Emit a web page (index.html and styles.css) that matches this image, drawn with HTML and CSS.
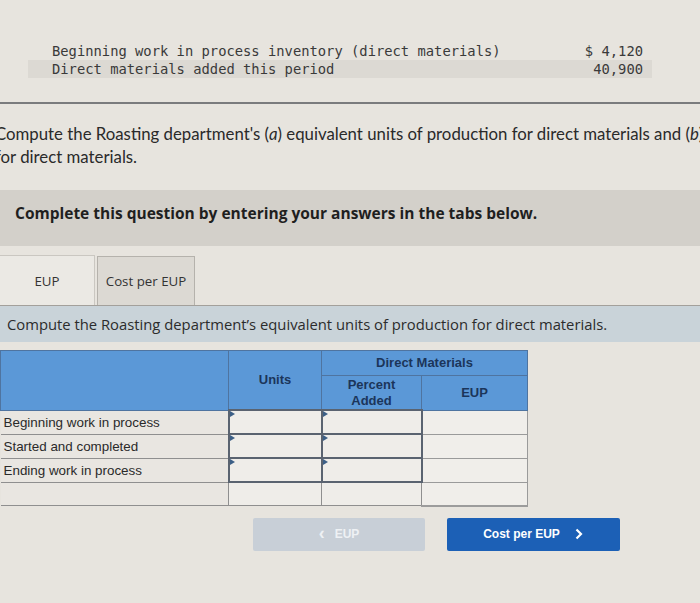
FILE: index.html
```html
<!DOCTYPE html>
<html>
<head>
<meta charset="utf-8">
<link rel="stylesheet" href="styles.css">
</head>
<body>
<div class="givens">
  <div class="grow"><span>Beginning work in process inventory (direct materials)</span><span>$ 4,120</span></div>
  <div class="grow shade"><span>Direct materials added this period</span><span>40,900</span></div>
</div>
<div class="rule"></div>
<div class="prompt">
  <div class="pline">Compute the Roasting department's (<i>a</i>) equivalent units of production for direct materials and (<i>b</i>) cost per equivalent unit of production</div>
  <div class="pline">for direct materials.</div>
</div>
<div class="instruct">Complete this question by entering your answers in the tabs below.</div>
<div class="tabs">
  <div class="tab active">EUP</div>
  <div class="tab">Cost per EUP</div>
</div>
<div class="qbar">Compute the Roasting department’s equivalent units of production for direct materials.</div>
<table class="eup">
  <colgroup>
    <col class="c-label"><col class="c-units"><col class="c-pct"><col class="c-eup">
  </colgroup>
  <thead>
    <tr>
      <th rowspan="2"></th>
      <th rowspan="2">Units</th>
      <th colspan="2" class="dm">Direct Materials</th>
    </tr>
    <tr>
      <th class="sub">Percent<br>Added</th>
      <th class="sub">EUP</th>
    </tr>
  </thead>
  <tbody>
    <tr>
      <td class="lbl">Beginning work in process</td>
      <td class="in"><span class="mark"></span></td>
      <td class="in"><span class="mark"></span></td>
      <td class="out"></td>
    </tr>
    <tr>
      <td class="lbl">Started and completed</td>
      <td class="in"><span class="mark"></span></td>
      <td class="in"><span class="mark"></span></td>
      <td class="out"></td>
    </tr>
    <tr>
      <td class="lbl">Ending work in process</td>
      <td class="in"><span class="mark"></span></td>
      <td class="in"><span class="mark"></span></td>
      <td class="out"></td>
    </tr>
    <tr>
      <td class="lbl"></td>
      <td class="plain"></td>
      <td class="plain"></td>
      <td class="out total"></td>
    </tr>
  </tbody>
</table>
<div class="nav">
  <div class="btn prev"><span class="chev">&lsaquo;</span> EUP</div>
  <div class="btn next">Cost per EUP <svg class="arrow" width="10" height="12" viewBox="0 0 10 12"><path d="M2.5 1.5 L7 6 L2.5 10.5" fill="none" stroke="#fff" stroke-width="2.2"/></svg></div>
</div>
</body>
</html>
```
FILE: styles.css
```css
html, body {
  margin: 0;
  padding: 0;
}
body {
  width: 700px;
  height: 603px;
  overflow: hidden;
  background: #e7e4de;
  font-family: "Liberation Sans", Arial, sans-serif;
  color: #2b2b2b;
}
.givens {
  margin: 43px 48px 0 28px;
  font-family: "DejaVu Sans Mono", monospace;
  font-size: 13.8px;
  color: #3a3a3a;
}
.grow {
  display: flex;
  justify-content: space-between;
  padding: 0 9px 0 24px;
  height: 17px;
  line-height: 17px;
}
.grow.shade {
  background: #dcd9d3;
  height: 18px;
  line-height: 18px;
}
.rule {
  height: 2px;
  background: #7a7b7d;
  margin-top: 24px;
}
.prompt {
  margin: 18px 0 0 -5px;
  font-family: Lato, "Open Sans", sans-serif;
  font-size: 16.8px;
  line-height: 23px;
  color: #2a2a2a;
  white-space: nowrap;
}
.instruct {
  margin-top: 22px;
  height: 56px;
  box-sizing: border-box;
  padding: 14px 0 0 15px;
  background: #d3d0ca;
  font-family: "Open Sans", sans-serif;
  font-weight: 700;
  font-size: 15.5px;
  line-height: 18px;
  color: #1f1f1f;
}
.tabs {
  margin-top: 9px;
  display: flex;
  align-items: flex-end;
  gap: 2px;
  border-bottom: 1px solid #a3a09b;
}
.tab {
  box-sizing: border-box;
  display: flex;
  align-items: center;
  justify-content: center;
  font-family: "Open Sans", sans-serif;
  font-size: 13.3px;
  color: #333;
  background: #dcd9d3;
  border: 1px solid #b5b2ac;
  border-bottom: none;
  width: 98px;
  height: 49px;
}
.tab.active {
  width: 96px;
  height: 50px;
  margin-left: -1px;
  background: #ebe9e4;
  border-color: #cac7c1;
}
.qbar {
  height: 36px;
  line-height: 37px;
  padding-left: 7px;
  background: #c9d3d9;
  font-family: "Open Sans", sans-serif;
  font-size: 14.8px;
  color: #2c2c2c;
}
.eup {
  margin-top: 8px;
  border-collapse: collapse;
  table-layout: fixed;
  width: 527px;
}
.c-label { width: 228px; }
.c-units { width: 93px; }
.c-pct { width: 100px; }
.c-eup { width: 106px; }
.eup th {
  background: #5b98d7;
  color: #1b355a;
  font-size: 13px;
  font-weight: 700;
  border: 1px solid #4f74a0;
  padding: 0;
  line-height: 16px;
  text-align: center;
}
.eup th.dm { height: 24px; }
.eup th.sub { height: 33px; }
.eup td {
  height: 22px;
  padding: 0;
  border: 1px solid #8f8f8f;
  background: #efede9;
  position: relative;
}
.eup td.lbl {
  background: #e9e6e1;
  padding-left: 3px;
  font-size: 13.4px;
  color: #2a2a2a;
  white-space: nowrap;
  border-left: none;
}
.eup td.in {
  border: 2px solid #5a6370;
}
.eup td.out {
  border: 1px solid #9a9a9a;
  background: #f0eeea;
}
.eup td.total {
  border-bottom: 2px solid #9c9c9c;
}
.mark {
  position: absolute;
  left: 0;
  top: 0;
  width: 0;
  height: 0;
  border-top: 3px solid transparent;
  border-bottom: 3px solid transparent;
  border-left: 5px solid #3c5f86;
}
.nav {
  margin-top: 11px;
  padding-left: 253px;
  display: flex;
  gap: 22px;
}
.btn {
  box-sizing: border-box;
  height: 33px;
  display: flex;
  align-items: center;
  justify-content: center;
  border-radius: 2px;
  font-size: 12px;
  font-weight: 700;
  color: #fff;
}
.btn.prev {
  width: 172px;
  background: #c8cfd7;
  color: #eef1f4;
  gap: 10px;
}
.chev {
  font-size: 18px;
  line-height: 18px;
  margin-top: -3px;
}
.btn.next {
  width: 173px;
  background: #1c60b6;
  gap: 14px;
}
.arrow {
  display: block;
}
```
